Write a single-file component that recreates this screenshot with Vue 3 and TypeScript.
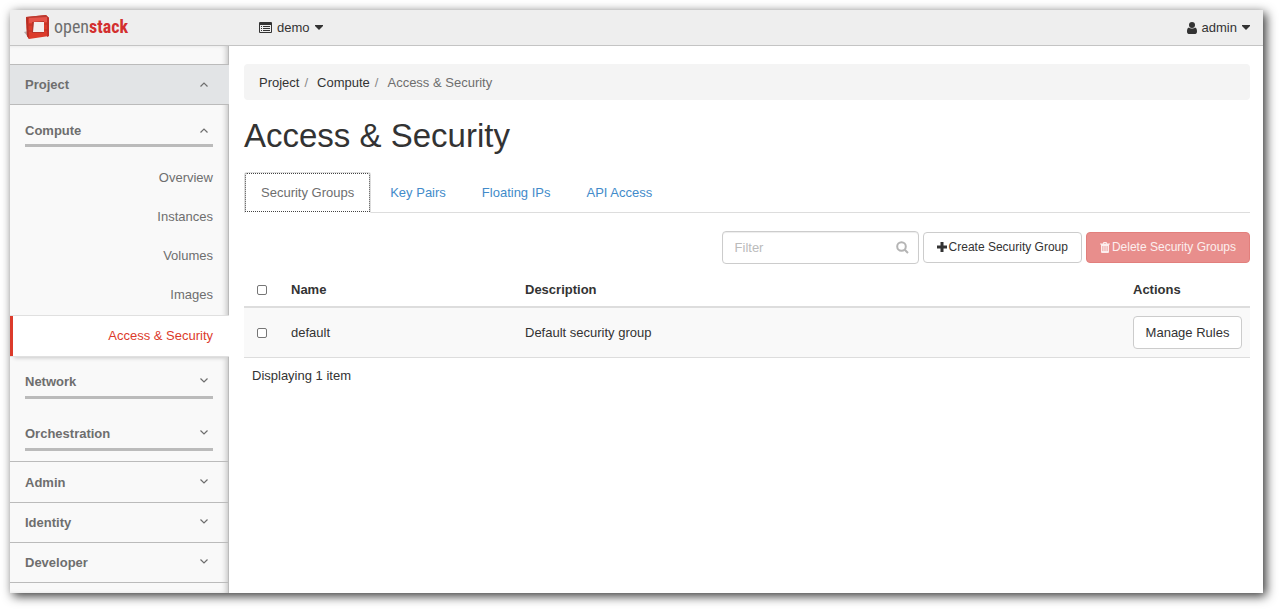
<script setup lang="ts">
import { ref } from 'vue'

interface Tab {
  id: string
  label: string
}

interface SecurityGroup {
  name: string
  description: string
}

const computeLinks: string[] = ['Overview', 'Instances', 'Volumes', 'Images', 'Access & Security']
const collapsedGroups: string[] = ['Network', 'Orchestration']
const dashboards: string[] = ['Admin', 'Identity', 'Developer']
const tabs: Tab[] = [
  { id: 'groups', label: 'Security Groups' },
  { id: 'keys', label: 'Key Pairs' },
  { id: 'ips', label: 'Floating IPs' },
  { id: 'api', label: 'API Access' },
]
const groups: SecurityGroup[] = [{ name: 'default', description: 'Default security group' }]

const activeLink = ref('Access & Security')
const activeTab = ref('groups')
const filter = ref('')
const selected = ref<string[]>([])
</script>

<template>
  <div class="window">
    <header class="topbar">
      <a class="brand" href="#">
        <svg width="26" height="24" viewBox="0 0 26 24" aria-hidden="true">
          <path d="M0 17 L4 16 L4 22 Z" fill="#b5aaa8" />
          <path d="M2 2 L22 0 L25 3 L25 21 L5 24 L3 21 Z" fill="#dc3b2b" />
          <path d="M2 2 L22 0 L25 3 L5 4 Z" fill="#b93a30" />
          <path d="M5 3 L23 2 L23 7 L5 8 Z" fill="#e5544a" />
          <path d="M23 2 L25 3 L25 21 L23 22 Z" fill="#c0302a" />
          <path d="M2 2 L4 3 L5 24 L3 21 Z" fill="#b52d23" />
          <path d="M8 7 L20 6 L20 18 L8 18 Z" fill="#b8352b" />
          <path d="M10 7 L20 7 L20 17 L9 17 Z" fill="#f4eeee" />
          <path d="M3 10 L8 10 M3 16 L9 16 M20 9 L25 9 M20 15 L25 15" stroke="#b8352b" stroke-width="1" />
        </svg>
        <span class="wordmark">open<b>stack</b></span>
      </a>
      <button class="menu" type="button">
        <svg width="13" height="11" viewBox="0 0 13 11" aria-hidden="true">
          <path fill="currentColor" fill-rule="evenodd" d="M1 0h11a1 1 0 0 1 1 1v9a1 1 0 0 1-1 1H1a1 1 0 0 1-1-1V1a1 1 0 0 1 1-1zM1 3v7h11V3zM2 4h1v1H2zM4 4h7v1H4zM2 6h1v1H2zM4 6h7v1H4zM2 8h1v1H2zM4 8h7v1H4z" />
        </svg>
        <span>demo</span>
        <svg width="8" height="5" viewBox="0 0 8 5" aria-hidden="true"><path fill="currentColor" d="M0 0h8v1L4 5 0 1z" /></svg>
      </button>
      <button class="menu user" type="button">
        <svg width="10" height="12" viewBox="0 0 10 12" aria-hidden="true">
          <circle cx="5" cy="3" r="3" fill="currentColor" />
          <path fill="currentColor" d="M2 5.500c1 1.400 5 1.400 6 0 1.500.3 2 2 2 4 0 1.500-.7 2.500-1.700 2.500H1.700C.7 12 0 11 0 9.500c0-2 .5-3.700 2-4z" />
        </svg>
        <span>admin</span>
        <svg width="8" height="5" viewBox="0 0 8 5" aria-hidden="true"><path fill="currentColor" d="M0 0h8v1L4 5 0 1z" /></svg>
      </button>
    </header>

    <div class="body">
      <nav class="sidebar" aria-label="Dashboards">
        <button class="dash open" type="button" aria-expanded="true">
          <span>Project</span>
          <svg class="chev" width="8" height="8" viewBox="0 0 8 8" aria-hidden="true"><path d="M.5 5.500 4 2 7.500 5.500" /></svg>
        </button>
        <div class="panel">
          <button class="group" type="button" aria-expanded="true">
            <span>Compute</span>
            <svg class="chev" width="8" height="8" viewBox="0 0 8 8" aria-hidden="true"><path d="M.5 5.500 4 2 7.500 5.500" /></svg>
          </button>
          <ul class="links">
            <li v-for="link in computeLinks" :key="link">
              <a href="#" :class="{ active: link === activeLink }" @click.prevent="activeLink = link">{{ link }}</a>
            </li>
          </ul>
          <button v-for="g in collapsedGroups" :key="g" class="group closed" type="button" aria-expanded="false">
            <span>{{ g }}</span>
            <svg class="chev" width="8" height="8" viewBox="0 0 8 8" aria-hidden="true"><path d="M.5 2.500 4 6 7.500 2.500" /></svg>
          </button>
        </div>
        <div class="dashes">
          <button v-for="d in dashboards" :key="d" class="dash" type="button" aria-expanded="false">
            <span>{{ d }}</span>
            <svg class="chev" width="8" height="8" viewBox="0 0 8 8" aria-hidden="true"><path d="M.5 2.500 4 6 7.500 2.500" /></svg>
          </button>
        </div>
      </nav>

      <main class="content">
        <ol class="breadcrumb">
          <li><a href="#">Project</a></li>
          <li><a href="#">Compute</a></li>
          <li class="current">Access &amp; Security</li>
        </ol>
        <h1>Access &amp; Security</h1>
        <ul class="tabs">
          <li v-for="t in tabs" :key="t.id">
            <a href="#" :class="{ active: t.id === activeTab }" @click.prevent="activeTab = t.id">{{ t.label }}</a>
          </li>
        </ul>

        <div class="toolbar">
          <div class="search">
            <input v-model="filter" type="text" placeholder="Filter" aria-label="Filter" />
            <svg width="13" height="13" viewBox="0 0 13 13" aria-hidden="true">
              <circle cx="5.500" cy="5.500" r="4.300" /><path d="M8.700 8.700 12 12" />
            </svg>
          </div>
          <button class="btn small" type="button">
            <svg width="10" height="12" viewBox="0 0 10 12" aria-hidden="true"><path fill="currentColor" d="M3.500 0h3v3.500H10v3H6.500V10h-3V6.500H0v-3h3.500z" /></svg>
            <span>Create Security Group</span>
          </button>
          <button class="btn small danger" type="button" :disabled="selected.length === 0">
            <svg width="10" height="11" viewBox="0 0 10 11" aria-hidden="true">
              <path fill="currentColor" fill-rule="evenodd" d="M3.500 0h3l.7 1.500H10v1H9V10a1 1 0 0 1-1 1H2a1 1 0 0 1-1-1V2.500H0v-1h2.800zM3.800 1.500h2.400L6 1H4zM2.500 4v5h.8V4zM4.600 4v5h.8V4zM6.700 4v5h.8V4z" />
            </svg>
            <span>Delete Security Groups</span>
          </button>
        </div>

        <table>
          <colgroup>
            <col class="col-check" />
            <col class="col-name" />
            <col />
            <col class="col-actions" />
          </colgroup>
          <thead>
            <tr>
              <th class="check"><input type="checkbox" aria-label="Select all" /></th>
              <th>Name</th>
              <th>Description</th>
              <th>Actions</th>
            </tr>
          </thead>
          <tbody>
            <tr v-for="g in groups" :key="g.name">
              <td class="check"><input v-model="selected" type="checkbox" :value="g.name" :aria-label="g.name" /></td>
              <td>{{ g.name }}</td>
              <td>{{ g.description }}</td>
              <td><button class="btn manage" type="button">Manage Rules</button></td>
            </tr>
          </tbody>
          <tfoot>
            <tr>
              <td colspan="4">Displaying {{ groups.length }} item</td>
            </tr>
          </tfoot>
        </table>
      </main>
    </div>
  </div>
</template>

<style>
body {
  background: #fff;
}
#app {
  display: flow-root;
}
</style>

<style scoped>
* {
  box-sizing: border-box;
}
.window {
  display: flex;
  flex-direction: column;
  min-height: calc(100vh - 26px);
  margin: 10px 16px 16px 10px;
  background: #fff;
  box-shadow: 3px 3px 10px rgba(0, 0, 0, 0.8);
  color: #333;
  font-family: "Liberation Sans", Arial, sans-serif;
  font-size: 13px;
  line-height: 19px;
}
button,
input {
  margin: 0;
  font: inherit;
  color: inherit;
}
button {
  cursor: pointer;
}
a {
  text-decoration: none;
  color: inherit;
}
ul,
ol {
  margin: 0;
  padding: 0;
  list-style: none;
}

.topbar {
  display: flex;
  align-items: center;
  height: 36px;
  padding-right: 13px;
  background: #eee;
  border-bottom: 1px solid #c4c4c4;
}
.brand {
  display: flex;
  align-items: center;
  gap: 4px;
  width: 249px;
  padding: 0 0 2px 14px;
}
.wordmark {
  font-family: "Roboto Condensed", "Open Sans Condensed", sans-serif;
  font-size: 18px;
  line-height: 24px;
  color: #6e6e6e;
}
.wordmark b {
  color: #d32f2f;
}
.menu {
  display: flex;
  align-items: center;
  gap: 5px;
  padding: 0;
  border: 0;
  background: none;
}
.user {
  margin-left: auto;
}

.body {
  display: flex;
  flex: 1;
}
.sidebar {
  flex: none;
  width: 219px;
  padding-top: 18px;
  background: #f9f9f9;
  border-right: 1px solid #bbb;
  box-shadow: inset -4px 0 6px -3px rgba(0, 0, 0, 0.25);
  color: #6e6e6e;
}
.dash,
.group {
  display: flex;
  align-items: center;
  justify-content: space-between;
  font-weight: bold;
  background: none;
  border: 0;
}
.dash {
  width: 100%;
  height: 40px;
  padding: 0 20px 0 15px;
  border-top: 1px solid #bbb;
}
.dash.open {
  width: 219px;
  height: 41px;
  padding-right: 21px;
  background: #e2e4e6;
  border-bottom: 1px solid #bbb;
}
.dashes {
  border-bottom: 1px solid #bbb;
}
.dashes .dash:first-child {
  height: 41px;
}
.chev {
  fill: none;
  stroke: #6e6e6e;
  stroke-width: 1.2;
}
.dashes .chev,
.closed .chev {
  margin-bottom: 3px;
}
.group {
  width: 188px;
  margin: 16px 15px 10px;
  padding: 0 5px 4px 0;
  border-bottom: 3px solid #bbb;
}
.closed {
  margin-top: 15px;
  padding-bottom: 5px;
}
.closed + .closed {
  margin-top: 25px;
}
.links {
  padding-top: 1px;
}
.links a {
  display: block;
  padding: 10px 15px;
  text-align: right;
}
.links .active {
  width: 219px;
  margin-top: 1px;
  padding: 10px 16px 11px 12px;
  background: #fff;
  border: solid #e0e0e0;
  border-width: 1px 0;
  box-shadow: inset 3px 0 #dc3b2b, 0 5px 4px -4px rgba(0, 0, 0, 0.2);
  color: #dc3b2b;
}

.content {
  flex: 1;
  min-width: 0;
  padding: 18px 13px 18px 15px;
}
.breadcrumb {
  display: flex;
  padding: 9px 15px 8px;
  background: #f4f4f4;
  border-radius: 4px;
}
.breadcrumb li + li::before {
  content: "/";
  margin: 0 9px 0 5px;
  color: #888;
}
.current {
  color: #6e6e6e;
}
h1 {
  margin: 18px 0;
  font-size: 33px;
  font-weight: normal;
  line-height: 36px;
}
.tabs {
  display: flex;
  gap: 2px;
  border-bottom: 1px solid #ddd;
}
.tabs a {
  display: block;
  padding: 11px 17px 10px;
  color: #428bca;
}
.tabs .active {
  margin-bottom: -1px;
  padding: 10px 16px;
  background: #fff;
  border: 1px solid #ddd;
  border-bottom-color: #fff;
  border-radius: 3px 3px 0 0;
  outline: 1px dotted #444;
  outline-offset: -2px;
  color: #6e6e6e;
}

.toolbar {
  display: flex;
  align-items: center;
  justify-content: flex-end;
  gap: 4px;
  margin-top: 18px;
}
.search {
  display: flex;
  align-items: center;
  width: 197px;
  height: 33px;
  padding: 0 9px 0 12px;
  border: 1px solid #ccc;
  border-radius: 4px;
  box-shadow: inset 0 1px 1px rgba(0, 0, 0, 0.075);
}
.search input {
  flex: 1;
  min-width: 0;
  padding: 0;
  border: 0;
  outline: 0;
  background: none;
}
.search input::placeholder {
  color: #bbb;
  opacity: 1;
}
.search svg {
  fill: none;
  stroke: #b4b4b4;
  stroke-width: 2;
}
.btn {
  display: flex;
  align-items: center;
  justify-content: center;
  gap: 2px;
  padding: 6px 12px;
  background: #fff;
  border: 1px solid #ccc;
  border-radius: 4px;
  white-space: nowrap;
}
.small {
  height: 31px;
  font-size: 12px;
  padding: 0 13px;
}
.danger {
  background: #e88e8c;
  border-color: #e27f7c;
  color: #fceeee;
}

table {
  width: 100%;
  margin-top: 8px;
  border-collapse: separate;
  border-spacing: 0;
  table-layout: fixed;
}
.col-check {
  width: 39px;
}
.col-name {
  width: 234px;
}
.col-actions {
  width: 125px;
}
th,
td {
  padding: 8px;
  text-align: left;
  vertical-align: middle;
}
th {
  padding: 8px 8px 7px;
  border-bottom: 2px solid #ddd;
}
tbody td {
  background: #f9f9f9;
  border-bottom: 1px solid #ddd;
}
.manage {
  width: 100%;
  height: 33px;
}
.check {
  padding-left: 13px;
}
.check input {
  display: block;
  appearance: none;
  width: 10px;
  height: 10px;
  background: #fff;
  border: 1px solid #767676;
  border-radius: 2px;
}
.check input:checked {
  background: #428bca;
}
</style>
